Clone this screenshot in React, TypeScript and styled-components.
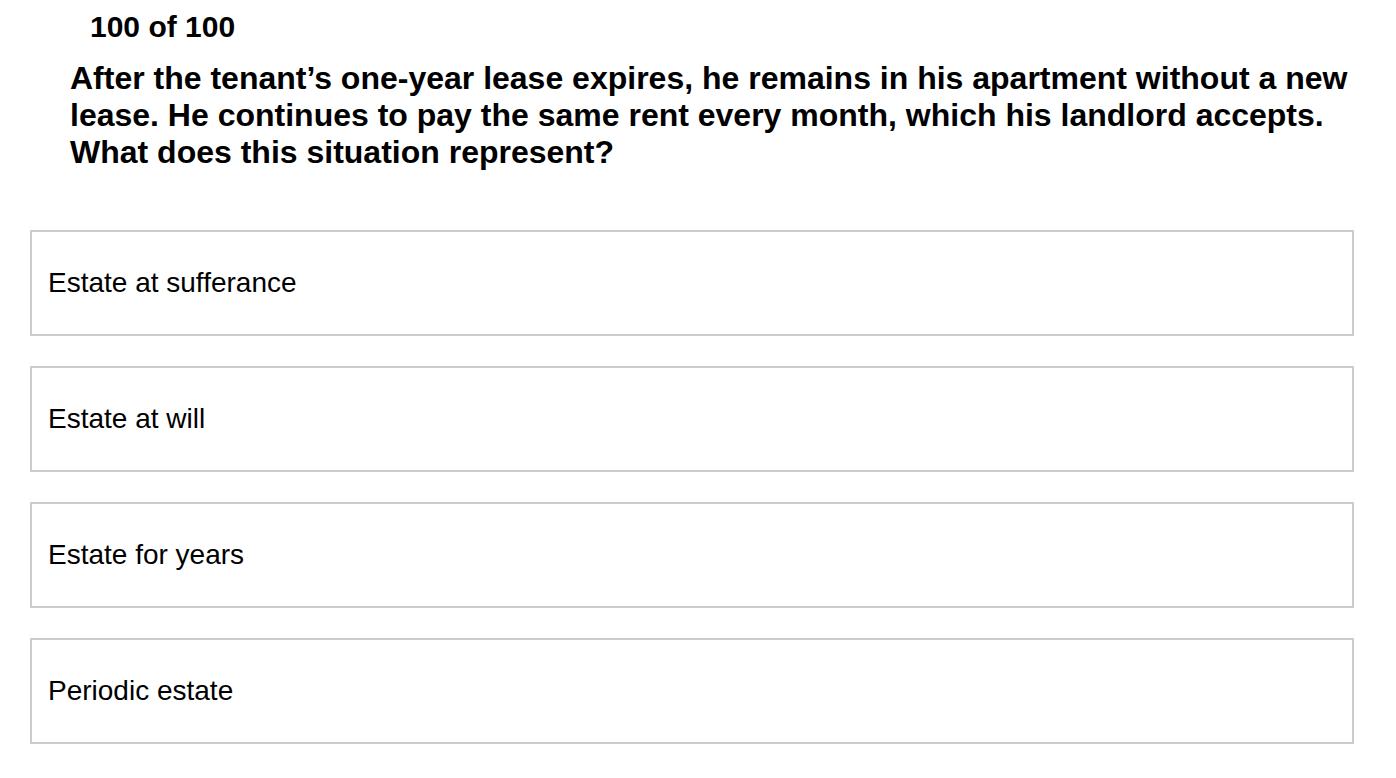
import styled, { createGlobalStyle } from "styled-components";

const GlobalStyle = createGlobalStyle`
  body {
    margin: 0;
    background: #fff;
    color: #000;
    font-family: "Liberation Sans", Arial, Helvetica, sans-serif;
  }
`;

const options = [
  "Estate at sufferance",
  "Estate at will",
  "Estate for years",
  "Periodic estate",
];

function App() {
  return (
    <>
      <GlobalStyle />
      <Page>
        <Counter>100 of 100</Counter>
        <Question>
          After the tenant’s one-year lease expires, he remains in his
          apartment without a new lease. He continues to pay the same rent
          every month, which his landlord accepts. What does this situation
          represent?
        </Question>
        <OptionList>
          {options.map((opt) => (
            <Option key={opt}>{opt}</Option>
          ))}
        </OptionList>
      </Page>
    </>
  );
}

export default App;

// ------ component styles -------
const Page = styled.main`
  padding: 0 42px 0 30px;
`;

const Counter = styled.div`
  padding: 10px 0 0 60px;
  font-size: 30px;
  font-weight: 700;
  line-height: 34px;
`;

const Question = styled.h1`
  margin: 16px 0 0 40px;
  font-size: 32px;
  font-weight: 700;
  line-height: 37px;
`;

const OptionList = styled.div`
  display: flex;
  flex-direction: column;
  gap: 30px;
  margin-top: 59px;
`;

const Option = styled.div`
  display: flex;
  align-items: center;
  height: 106px;
  box-sizing: border-box;
  padding: 0 16px;
  border: 2px solid #cccccc;
  font-size: 28px;
  cursor: pointer;
`;
